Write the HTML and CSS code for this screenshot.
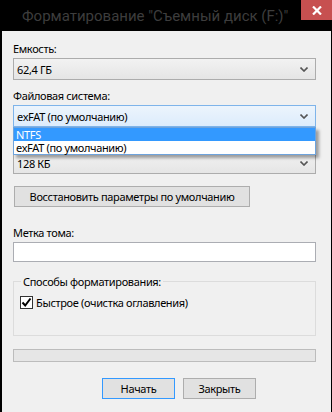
FILE: index.html
```html
<!DOCTYPE html>
<html lang="ru">
<head>
    <meta charset="UTF-8">
    <meta name="viewport" content="width=device-width, initial-scale=1.0">
    <title>Форматирование</title>
    <link rel="stylesheet" href="styles.css">
</head>
<body>
    <div class="window">
        <div class="titlebar">
            <span class="title">Форматирование "Съемный диск (F:)"</span>
            <div class="close">
                <svg width="10" height="9" viewBox="0 0 10 9"><path d="M1 0.5 L9 8.5 M9 0.5 L1 8.5" stroke="#fff" stroke-width="2.2"/></svg>
            </div>
        </div>

        <div class="client">
            <div class="label">Емкость:</div>
            <div class="combo">
                <span>62,4 ГБ</span>
                <svg class="arrow" width="8" height="5" viewBox="0 0 8 5"><path d="M0.5 0.5 L4 4 L7.5 0.5" fill="none" stroke="#555" stroke-width="1.6"/></svg>
            </div>

            <div class="label">Файловая система:</div>
            <div class="combo active">
                <span>exFAT (по умолчанию)</span>
                <svg class="arrow" width="8" height="5" viewBox="0 0 8 5"><path d="M0.5 0.5 L4 4 L7.5 0.5" fill="none" stroke="#555" stroke-width="1.6"/></svg>
            </div>

            <div class="label">Размер кластера:</div>
            <div class="combo">
                <span>128 КБ</span>
                <svg class="arrow" width="8" height="5" viewBox="0 0 8 5"><path d="M0.5 0.5 L4 4 L7.5 0.5" fill="none" stroke="#555" stroke-width="1.6"/></svg>
            </div>

            <div class="dropdown">
                <div class="option selected">NTFS</div>
                <div class="option">exFAT (по умолчанию)</div>
            </div>

            <button class="btn restore">Восстановить параметры по умолчанию</button>

            <div class="label label-volume">Метка тома:</div>
            <div class="textbox"></div>

            <fieldset class="group">
                <legend>Способы форматирования:</legend>
                <div class="check-row">
                    <span class="checkbox">
                        <svg width="11" height="11" viewBox="0 0 11 11"><path d="M1.5 5.5 L4.2 8.5 L9.5 1.5" fill="none" stroke="#000" stroke-width="2"/></svg>
                    </span>
                    <span>Быстрое (очистка оглавления)</span>
                </div>
            </fieldset>

            <div class="progress"></div>

            <div class="actions">
                <button class="btn default">Начать</button>
                <button class="btn">Закрыть</button>
            </div>
        </div>
    </div>
</body>
</html>
```

FILE: styles.css
```css
body {
    margin: 0;
    background-color: #000;
    font-family: "Noto Sans", "Liberation Sans", sans-serif;
    font-size: 11px;
    letter-spacing: -0.35px;
    color: #000;
}
.window {
    width: 332px;
    height: 412px;
    overflow: hidden;
    display: flex;
    flex-direction: column;
}
.titlebar {
    height: 31px;
    display: flex;
    align-items: flex-start;
    justify-content: space-between;
}
.title {
    color: #3d3d3d;
    font-family: Roboto, sans-serif;
    font-size: 15px;
    letter-spacing: 0;
    line-height: 20px;
    margin: 6px 0 0 22px;
    white-space: nowrap;
}
.close {
    width: 31px;
    height: 20px;
    background-color: #c75050;
    display: flex;
    align-items: center;
    justify-content: center;
}
.client {
    position: relative;
    flex: 1;
    margin: 0 1px 0 2px;
    background-color: #f0f0f0;
    padding: 10px 15px 0 11px;
}
.label {
    line-height: 15px;
    margin-bottom: 2px;
}
.combo {
    height: 20px;
    border: 1px solid #acacac;
    background: linear-gradient(#f2f2f2, #e5e5e5);
    display: flex;
    align-items: center;
    justify-content: space-between;
    padding: 0 7px 0 3px;
    margin-bottom: 8px;
}
.combo.active {
    border-color: #7eb4ea;
    background: linear-gradient(#ecf4fc, #dcecfc);
}
.dropdown {
    position: absolute;
    top: 96px;
    left: 11px;
    width: 301px;
    border: 1px solid #6ea3dc;
    background-color: #fff;
    box-shadow: 3px 3px 3px rgba(0, 0, 0, 0.35);
}
.option {
    line-height: 13px;
    padding-left: 2px;
}
.option.selected {
    background-color: #3399ff;
    color: #fff;
}
.btn {
    font-family: inherit;
    font-size: 11px;
    letter-spacing: inherit;
    color: #000;
    height: 21px;
    border: 1px solid #adadad;
    background-color: #e1e1e1;
    padding: 0;
    white-space: nowrap;
}
.restore {
    display: block;
    width: 236px;
    margin: 12px 0 0 1px;
}
.label-volume {
    margin-top: 18px;
}
.textbox {
    height: 18px;
    border: 1px solid #abadb3;
    background-color: #fff;
}
.group {
    margin: 12px 0 0 0;
    padding: 0 0 26px 6px;
    border: 1px solid #dcdcdc;
    height: 34px;
}
.group legend {
    padding: 0 2px;
    margin-left: 1px;
    line-height: 15px;
}
.check-row {
    display: flex;
    align-items: center;
    gap: 3px;
    margin-top: 6px;
    line-height: 15px;
}
.checkbox {
    width: 11px;
    height: 11px;
    border: 1px solid #333;
    background-color: #fff;
    display: flex;
}
.progress {
    margin-top: 13px;
    height: 11px;
    border: 1px solid #bcbcbc;
    background-color: #e6e6e6;
}
.actions {
    display: flex;
    gap: 8px;
    margin: 16px 0 0 89px;
}
.actions .btn {
    width: 73px;
}
.btn.default {
    border-color: #3399ff;
}
```
